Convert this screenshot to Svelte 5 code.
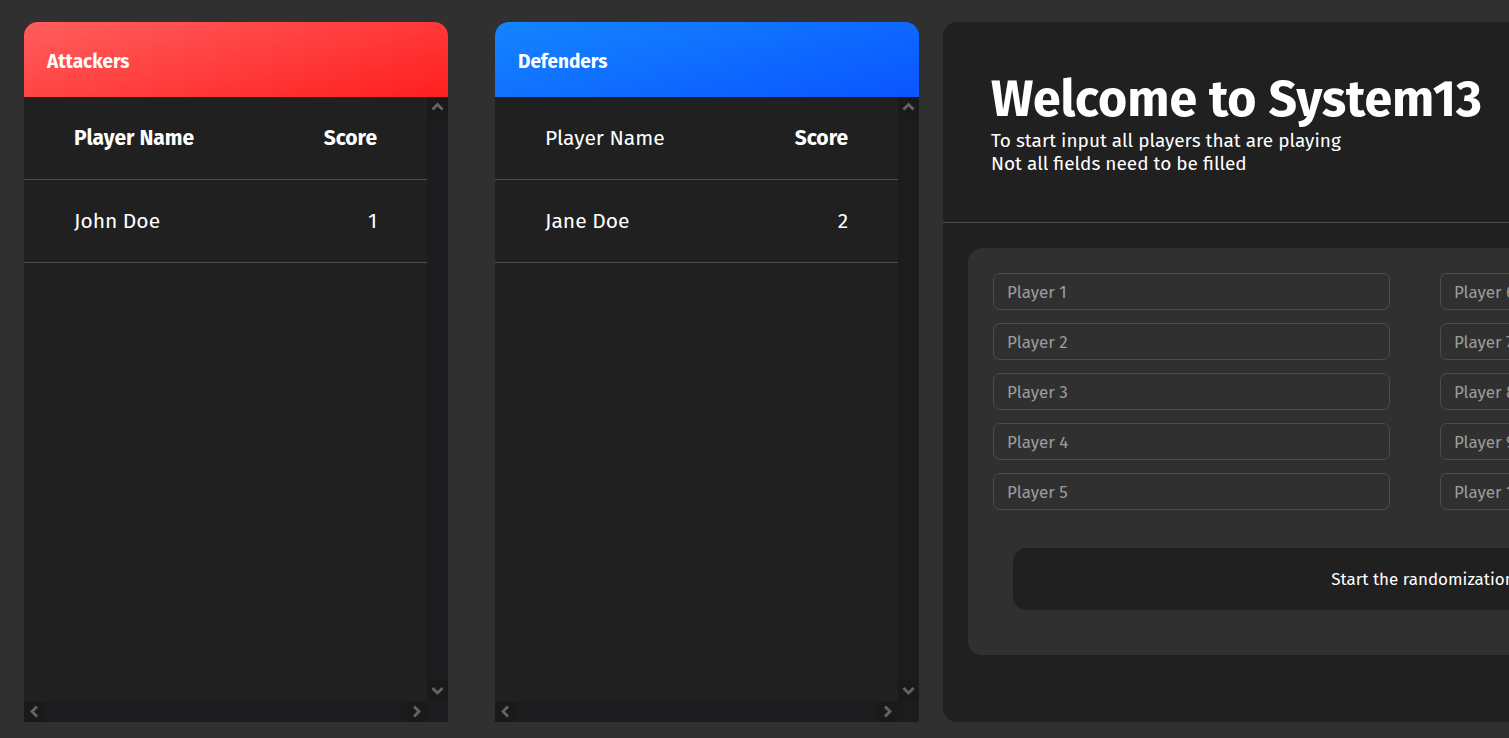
<script>
  const teams = [
    { id: 'attackers', name: 'Attackers', boldHead: true, players: [{ name: 'John Doe', score: 1 }] },
    { id: 'defenders', name: 'Defenders', boldHead: false, players: [{ name: 'Jane Doe', score: 2 }] }
  ];
  const slots = Array.from({ length: 10 }, (_, i) => i + 1);
</script>

{#snippet arrow(direction, d)}
  <button class="arrow" type="button" aria-label={`Scroll ${direction}`}>
    <svg viewBox="0 0 21 21" width="21" height="21" aria-hidden="true"><path {d} /></svg>
  </button>
{/snippet}

<main>
  {#each teams as team (team.id)}
    <section class="team">
      <header class={team.id}><h2>{team.name}</h2></header>
      <div class="body">
        <div class="content">
          <table>
            <thead>
              <tr>
                <th class:regular={!team.boldHead} scope="col">Player Name</th>
                <th scope="col">Score</th>
              </tr>
            </thead>
            <tbody>
              {#each team.players as player}
                <tr><td>{player.name}</td><td>{player.score}</td></tr>
              {/each}
            </tbody>
          </table>
        </div>
        <div class="bar vertical">
          {@render arrow('up', 'M5.5 12.5 L10.5 7.5 L15.5 12.5')}
          {@render arrow('down', 'M5.5 8 L10.5 13 L15.5 8')}
        </div>
        <div class="bar horizontal">
          {@render arrow('left', 'M13 5.5 L8 10.5 L13 15.5')}
          {@render arrow('right', 'M8 5.5 L13 10.5 L8 15.5')}
        </div>
        <div class="bar"></div>
      </div>
    </section>
  {/each}

  <section class="welcome">
    <div class="intro">
      <h1>Welcome to System13</h1>
      <p>To start input all players that are playing<br />Not all fields need to be filled</p>
    </div>
    <form>
      <div class="fields">
        {#each slots as n}
          <input type="text" aria-label={`Player ${n}`} placeholder={`Player ${n}`} />
        {/each}
      </div>
      <button class="start" type="button">Start the randomization</button>
    </form>
  </section>
</main>

<style>
  :global(body) {
    margin: 0;
    background: #303030;
    overflow: hidden;
  }

  main, main * {
    box-sizing: border-box;
  }

  main {
    display: flex;
    min-height: 100vh;
    padding: 22px 0 16px 24px;
    overflow: hidden;
    color: #fff;
    font-family: 'Fira Sans', 'Noto Sans', sans-serif;
  }

  h1, h2, p {
    margin: 0;
  }

  .team {
    display: flex;
    flex: 0 0 28.1vw;
    flex-direction: column;
    margin-right: 47px;
    background: #202020;
    border-radius: 14px 14px 0 0;
    overflow: hidden;
  }

  .team + .team {
    margin-right: 24px;
  }

  .team header {
    padding: 26px 23px 21px;
  }

  .attackers {
    background: linear-gradient(165deg, #ff5e5e, #ff1f1f);
  }

  .defenders {
    background: linear-gradient(165deg, #1485ff, #0a55ff);
  }

  h2 {
    font-size: 19px;
    line-height: 28px;
  }

  .body {
    display: grid;
    flex: 1;
    grid-template: 1fr 21px / 1fr 21px;
  }

  table {
    width: 100%;
    border-spacing: 0;
    font-size: 21px;
    line-height: 32px;
  }

  th, td {
    height: 83px;
    padding: 0 50px;
    border-bottom: 1px solid #4c4c4c;
    text-align: left;
    white-space: nowrap;
  }

  th + th, td + td {
    padding-left: 0;
    text-align: right;
  }

  .regular {
    font-weight: 400;
  }

  .bar {
    display: flex;
    justify-content: space-between;
    background: #1c1c1e;
  }

  .vertical {
    flex-direction: column;
  }

  .arrow {
    display: block;
    width: 21px;
    height: 21px;
    padding: 0;
    border: 0;
    background: #1a1a1b;
  }

  .arrow svg {
    display: block;
    fill: none;
    stroke: #646464;
    stroke-width: 2.8;
  }

  .welcome {
    flex: 0 0 63.6vw;
    background: #202020;
    border-radius: 14px;
  }

  .intro {
    height: 201px;
    padding: 47px 48px 0;
    border-bottom: 1px solid #4c4c4c;
  }

  h1 {
    font-size: 50px;
    line-height: 60px;
    white-space: nowrap;
  }

  p {
    font-size: 19px;
    line-height: 23px;
  }

  form {
    margin: 25px;
    padding: 25px 25px 45px;
    background: #303030;
    border-radius: 14px;
  }

  .fields {
    display: grid;
    grid-template-rows: repeat(5, 37px);
    grid-auto-columns: 26.3vw;
    grid-auto-flow: column;
    gap: 13px 50px;
  }

  input {
    width: 100%;
    padding: 1px 13px 0;
    border: 1px solid #4c4c4c;
    border-radius: 7px;
    background: transparent;
    color: #fff;
    font: inherit;
    font-size: 17px;
  }

  input::placeholder {
    color: #9c9c9c;
  }

  .start {
    display: block;
    width: calc(100% - 40px);
    height: 62px;
    margin: 38px 20px 0;
    border: 0;
    border-radius: 14px;
    background: #202020;
    color: #fff;
    font: inherit;
    font-size: 17px;
  }
</style>
